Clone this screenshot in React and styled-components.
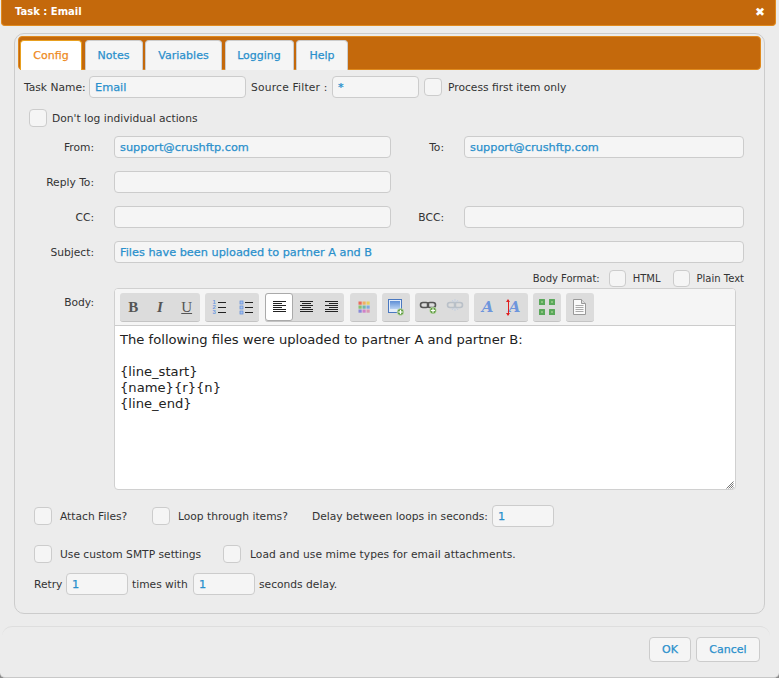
import styled, { createGlobalStyle } from 'styled-components';

const GlobalStyle = createGlobalStyle`
  html, body {
    margin: 0;
    padding: 0;
    background: #8a8a8a;
  }
  * {
    box-sizing: border-box;
  }
`;

function AlignIcon({ kind }) {
  const widths = [13, 9, 13, 9, 13, 13];
  return (
    <svg width="16" height="16" viewBox="0 0 16 16">
      {widths.map((len, i) => {
        let start = 2;
        if (kind === 'center') start = 2 + Math.floor((13 - len) / 2);
        if (kind === 'right') start = 2 + 13 - len;
        return <rect key={i} x={start} y={2 + i * 2} width={len} height="1" fill="#222" />;
      })}
    </svg>
  );
}

function ListIcon({ numbered }) {
  const rows = [3, 8, 13];
  return (
    <svg width="16" height="16" viewBox="0 0 16 16">
      {rows.map((y, i) => (
        <g key={y}>
          {numbered ? (
            <text x="1.5" y={y + 2} fontSize="6" fontWeight="700" fontFamily="Liberation Sans, sans-serif" fill="#6f9be0">
              {i + 1}
            </text>
          ) : (
            <rect x="2" y={y - 1} width="3" height="3" fill="#a9c3ee" stroke="#5f8bd8" strokeWidth="0.7" />
          )}
          <rect x="7" y={y} width="8" height="1" fill="#222" />
        </g>
      ))}
    </svg>
  );
}

function PlusBadge({ x, y }) {
  return (
    <g>
      <circle cx={x} cy={y} r="3.4" fill="#5c9a3c" stroke="#e4f2dc" strokeWidth="0.6" />
      <rect x={x - 2.2} y={y - 0.6} width="4.4" height="1.2" fill="#fff" />
      <rect x={x - 0.6} y={y - 2.2} width="1.2" height="4.4" fill="#fff" />
    </g>
  );
}

function SwatchIcon() {
  const colors = ['#e96a5a', '#f0b060', '#e8d060', '#88c070', '#70b8a8', '#80a8e0', '#8888d8', '#d080c8', '#d898b0'];
  return (
    <svg width="16" height="16" viewBox="0 0 16 16">
      {colors.map((c, i) => (
        <rect key={c} x={2.5 + (i % 3) * 4} y={2.5 + Math.floor(i / 3) * 4} width="3.2" height="3.2" fill={c} />
      ))}
    </svg>
  );
}

function ImageIcon() {
  return (
    <svg width="18" height="18" viewBox="0 0 18 18">
      <defs>
        <linearGradient id="picture" x1="0" y1="0" x2="0" y2="1">
          <stop offset="0" stopColor="#5f8fd6" />
          <stop offset="1" stopColor="#b9d2f2" />
        </linearGradient>
      </defs>
      <rect x="1.5" y="1.5" width="13" height="13" fill="#e4edf9" stroke="#4a78c0" />
      <rect x="3" y="3" width="10" height="8" fill="url(#picture)" />
      <PlusBadge x={13.5} y={14} />
    </svg>
  );
}

function LinkIcon({ off }) {
  const stroke = off ? '#b9c0c8' : '#555';
  return (
    <svg width="20" height="18" viewBox="0 0 20 18">
      <rect x="1.5" y="4.5" width="8" height="5" rx="2.5" fill="none" stroke={stroke} strokeWidth="1.6" />
      <rect x="8.5" y="4.5" width="8" height="5" rx="2.5" fill="none" stroke={stroke} strokeWidth="1.6" />
      {off && <path d="M9 1v3M9 10v3M6 2l1.5 2M12 2l-1.5 2M6 12l1.5-2M12 12l-1.5-2" stroke="#c4cfe0" fill="none" />}
      {!off && <PlusBadge x={14} y={12.5} />}
    </svg>
  );
}

function ExpandIcon() {
  return (
    <svg width="18" height="18" viewBox="0 0 18 18">
      {[
        [1, 1],
        [11, 1],
        [1, 11],
        [11, 11],
      ].map(([x, y]) => (
        <g key={`${x}-${y}`}>
          <rect x={x} y={y} width="6" height="6" rx="0.5" fill="#5aa85a" />
          <rect x={x + 2} y={y + 2} width="2" height="2" fill="#8cc480" />
        </g>
      ))}
    </svg>
  );
}

function DocIcon() {
  return (
    <svg width="16" height="18" viewBox="0 0 16 18">
      <path d="M1.5 1.5h8l4 4v11h-12z" fill="#fafafa" stroke="#999" />
      <path d="M9.5 1.5v4h4" fill="#ddd" stroke="#999" />
      <path d="M3.5 7.5h8M3.5 9.5h8M3.5 11.5h8M3.5 13.5h8" stroke="#aaa" />
    </svg>
  );
}

function ResizeGrip() {
  return (
    <svg width="8" height="8" viewBox="0 0 8 8">
      <path d="M7.5 0.5l-7 7M7.5 2.5l-5 5M7.5 4.5l-3 3M7.5 6.5l-1 1" stroke="#777" fill="none" />
    </svg>
  );
}

function App() {
  return (
    <Page>
      <GlobalStyle />
      <TitleBar>
        <TitleText>Task : Email</TitleText>
        <CloseMark>✖</CloseMark>
      </TitleBar>

      <Panel>
        <TabBar>
          <Tab $active $width={62}>Config</Tab>
          <Tab $width={58}>Notes</Tab>
          <Tab $width={77}>Variables</Tab>
          <Tab $width={69}>Logging</Tab>
          <Tab $width={52}>Help</Tab>
        </TabBar>

        <TopRow>
          <Label $width={61}>Task Name:</Label>
          <Field $width={157} defaultValue="Email" />
          <SourceLabel>Source Filter :</SourceLabel>
          <Field $width={87} defaultValue="*" />
          <Check type="checkbox" />
          <Label>Process first item only</Label>
        </TopRow>

        <LogRow>
          <Check type="checkbox" />
          <Label>Don't log individual actions</Label>
        </LogRow>

        <FormGrid>
          <FormLabel>From:</FormLabel>
          <Field defaultValue="support@crushftp.com" />
          <FormLabel>To:</FormLabel>
          <Field defaultValue="support@crushftp.com" />

          <FormLabel>Reply To:</FormLabel>
          <Field />
          <span />
          <span />

          <FormLabel>CC:</FormLabel>
          <Field />
          <FormLabel>BCC:</FormLabel>
          <Field />

          <FormLabel>Subject:</FormLabel>
          <WideField defaultValue="Files have been uploaded to partner A and B" />
        </FormGrid>

        <FormatRow>
          <Label>Body Format:</Label>
          <Check type="checkbox" />
          <Label>HTML</Label>
          <Check type="checkbox" />
          <Label>Plain Text</Label>
        </FormatRow>

        <BodyRow>
          <BodyLabel>Body:</BodyLabel>
          <Editor>
            <Toolbar>
              <ToolGroup $width={80}>
                <ToolButton><BoldGlyph>B</BoldGlyph></ToolButton>
                <ToolButton><ItalicGlyph>I</ItalicGlyph></ToolButton>
                <ToolButton><UnderGlyph>U</UnderGlyph></ToolButton>
              </ToolGroup>
              <ToolGroup $width={54}>
                <ToolButton><ListIcon numbered /></ToolButton>
                <ToolButton><ListIcon /></ToolButton>
              </ToolGroup>
              <AlignGroup $width={79}>
                <ToolButton $active><AlignIcon kind="left" /></ToolButton>
                <ToolButton><AlignIcon kind="center" /></ToolButton>
                <ToolButton><AlignIcon kind="right" /></ToolButton>
              </AlignGroup>
              <ToolGroup $width={27}>
                <ToolButton><SwatchIcon /></ToolButton>
              </ToolGroup>
              <ToolGroup $width={28}>
                <ToolButton><ImageIcon /></ToolButton>
              </ToolGroup>
              <ToolGroup $width={54}>
                <ToolButton><LinkIcon /></ToolButton>
                <ToolButton><LinkIcon off /></ToolButton>
              </ToolGroup>
              <ToolGroup $width={54}>
                <ToolButton><FontGlyph>A</FontGlyph></ToolButton>
                <ToolButton>
                  <SizeArrow />
                  <FontGlyph>A</FontGlyph>
                </ToolButton>
              </ToolGroup>
              <ToolGroup $width={28}>
                <ToolButton><ExpandIcon /></ToolButton>
              </ToolGroup>
              <ToolGroup $width={28}>
                <ToolButton><DocIcon /></ToolButton>
              </ToolGroup>
            </Toolbar>
            <EditorBody>
              <p>The following files were uploaded to partner A and partner B:</p>
              <p>&nbsp;</p>
              <p>{'{line_start}'}</p>
              <p>{'{name}{r}{n}'}</p>
              <p>{'{line_end}'}</p>
              <Grip><ResizeGrip /></Grip>
            </EditorBody>
          </Editor>
        </BodyRow>

        <OptionRow>
          <Check type="checkbox" />
          <OptionLabel $width={92}>Attach Files?</OptionLabel>
          <Check type="checkbox" />
          <OptionLabel $width={142}>Loop through items?</OptionLabel>
          <DelayLabel>Delay between loops in seconds:</DelayLabel>
          <Field $width={62} defaultValue="1" />
        </OptionRow>

        <SmtpRow>
          <Check type="checkbox" />
          <OptionLabel $width={163}>Use custom SMTP settings</OptionLabel>
          <Check type="checkbox" />
          <LongOption>Load and use mime types for email attachments.</LongOption>
        </SmtpRow>

        <RetryRow>
          <Label $width={28}>Retry</Label>
          <Field $width={62} defaultValue="1" />
          <Label $width={57}>times with</Label>
          <Field $width={62} defaultValue="1" />
          <Label>seconds delay.</Label>
        </RetryRow>
      </Panel>

      <Footer>
        <ActionButton $width={42}>OK</ActionButton>
        <ActionButton $width={64}>Cancel</ActionButton>
      </Footer>
    </Page>
  );
}

export default App;

const uiFont = `"DejaVu Sans", Verdana, sans-serif`;

const Page = styled.div`
  width: 779px;
  height: 678px;
  overflow: hidden;
  background: #ececec;
  border-bottom: 1px solid #c8c8c8;
  border-radius: 0 0 5px 5px;
  font-family: ${uiFont};
  font-size: 10.7px;
  color: #333333;
`;

const TitleBar = styled.div`
  display: flex;
  align-items: center;
  justify-content: space-between;
  width: 775px;
  height: 26px;
  margin-left: 1px;
  padding: 0 10px 2px 13px;
  background: #c4690c;
  border: 1px solid #e08a1e;
  border-top: none;
  border-radius: 0 0 4px 4px;
  color: #ffffff;
`;

const TitleText = styled.span`
  font-weight: 700;
  font-size: 10px;
`;

const CloseMark = styled.span`
  font-size: 12px;
`;

const Panel = styled.div`
  width: 751px;
  height: 581px;
  margin: 7px 0 0 14px;
  padding: 2px 3px 0;
  background: #ececec;
  border: 1px solid #cccccc;
  border-radius: 10px;
`;

const TabBar = styled.div`
  display: flex;
  align-items: flex-end;
  gap: 2.5px;
  width: 743px;
  height: 34px;
  padding-left: 1px;
  background: #c4690c;
  border: 1px solid #e08a1e;
  border-radius: 4px;
`;

const Tab = styled.div`
  display: flex;
  align-items: center;
  justify-content: center;
  width: ${(p) => p.$width}px;
  height: 30px;
  margin-bottom: -1px;
  padding-bottom: 1px;
  background: ${(p) => (p.$active ? '#ffffff' : '#f5f5f5')};
  border: 1px solid ${(p) => (p.$active ? '#e8a020' : '#cccccc')};
  border-bottom: none;
  border-radius: 4px 4px 0 0;
  color: ${(p) => (p.$active ? '#ee8a1d' : '#2a90cc')};
  font-size: 11px;
  -webkit-text-stroke: 0.25px currentColor;
`;

const Label = styled.span`
  flex: none;
  width: ${(p) => (p.$width ? `${p.$width}px` : 'auto')};
  white-space: nowrap;
`;

const SourceLabel = styled(Label)`
  width: 78px;
  padding-left: 1px;
  letter-spacing: 0.2px;
`;

const Field = styled.input`
  flex: none;
  width: ${(p) => (p.$width ? `${p.$width}px` : '100%')};
  height: 22px;
  padding: 0 5px;
  background: #f5f5f5;
  border: 1px solid #cccccc;
  border-radius: 4px;
  outline: none;
  color: #2a90cc;
  font-family: ${uiFont};
  font-size: 11.3px;
  -webkit-text-stroke: 0.25px currentColor;
`;

const WideField = styled(Field)`
  grid-column: 2 / 5;
`;

const Check = styled.input`
  appearance: none;
  flex: none;
  width: 18px;
  height: 18px;
  margin: 0;
  background: #f5f5f5;
  border: 1px solid #cccccc;
  border-radius: 4px;
`;

const TopRow = styled.div`
  display: flex;
  align-items: center;
  gap: 4px;
  height: 22px;
  margin: 6px 0 0 6px;

  & > input[type='checkbox'] {
    margin: 0 2px 0 1px;
  }
`;

const LogRow = styled.div`
  display: flex;
  align-items: center;
  gap: 5px;
  height: 18px;
  margin: 11px 0 0 11px;
`;

const FormGrid = styled.div`
  display: grid;
  grid-template-columns: 99px 277px 73px 280px;
  grid-auto-rows: 22px;
  row-gap: 13px;
  align-items: center;
  margin: 9px 0 0 -3px;
`;

const FormLabel = styled.span`
  padding-right: 20px;
  text-align: right;
`;

const FormatRow = styled.div`
  display: flex;
  align-items: center;
  justify-content: flex-end;
  gap: 7px;
  width: 726px;
  height: 18px;
  margin-top: 6px;
  font-size: 10px;

  & > input {
    width: 17px;
    height: 17px;
  }

  & > span:first-child {
    margin-right: 2px;
  }

  & > input + span {
    margin-right: 5px;
  }

  & > span:last-child {
    margin-right: 0;
  }
`;

const BodyRow = styled.div`
  display: flex;
  margin-top: 1px;
`;

const BodyLabel = styled.span`
  width: 99px;
  padding: 8px 20px 0 0;
  text-align: right;
  margin-left: -3px;
`;

const Editor = styled.div`
  position: relative;
  width: 622px;
  height: 202px;
  background: #ffffff;
  border: 1px solid #d0d0d0;
  border-radius: 4px;
  overflow: hidden;
`;

const Toolbar = styled.div`
  display: flex;
  gap: 5px;
  height: 37px;
  padding: 4px 0 0 5px;
  background: #f5f5f5;
  border-bottom: 1px solid #cccccc;
`;

const ToolGroup = styled.div`
  display: flex;
  flex: none;
  width: ${(p) => p.$width}px;
  height: 29px;
  background: #dcdcdc;
  border-bottom: 1px solid #c4c4c4;
  border-radius: 3px;
`;

const AlignGroup = styled(ToolGroup)`
  margin: 0 1px;
`;

const ToolButton = styled.div`
  position: relative;
  display: flex;
  flex: 1;
  align-items: center;
  justify-content: center;
  height: 28px;
  background: ${(p) => (p.$active ? '#ffffff' : 'transparent')};
  border: ${(p) => (p.$active ? '1px solid #aaaaaa' : 'none')};
  border-radius: 3px;
`;

const BoldGlyph = styled.span`
  font-family: "Liberation Serif", serif;
  font-size: 15px;
  font-weight: 700;
  color: #555555;
`;

const ItalicGlyph = styled(BoldGlyph)`
  font-style: italic;
`;

const UnderGlyph = styled(BoldGlyph)`
  font-weight: 400;
  text-decoration: underline;
`;

const FontGlyph = styled.span`
  font-family: "DejaVu Serif", serif;
  font-size: 15px;
  font-style: italic;
  font-weight: 700;
  color: #6d95dc;
`;

const SizeArrow = styled.span`
  position: absolute;
  left: 7px;
  top: 7px;
  width: 1px;
  height: 15px;
  background: #e02020;

  &::before,
  &::after {
    content: '';
    position: absolute;
    left: -2px;
    border-left: 2.5px solid transparent;
    border-right: 2.5px solid transparent;
  }

  &::before {
    top: -1px;
    border-bottom: 3px solid #e02020;
  }

  &::after {
    bottom: -1px;
    border-top: 3px solid #e02020;
  }
`;

const EditorBody = styled.div`
  padding: 6px 5px 0;
  font-size: 13.13px;
  line-height: 16px;
  color: #222222;

  p {
    margin: 0;
  }
`;

const Grip = styled.span`
  position: absolute;
  right: 1px;
  bottom: 0;
  line-height: 0;
`;

const OptionRow = styled.div`
  display: flex;
  align-items: center;
  height: 22px;
  margin: 15px 0 0 16px;
`;

const OptionLabel = styled.span`
  width: ${(p) => (p.$width ? `${p.$width}px` : 'auto')};
  padding-left: 8px;
  white-space: nowrap;

  & + input {
    margin-left: 8px;
  }
`;

const LongOption = styled(OptionLabel)`
  padding-left: 9px;
  letter-spacing: 0.05px;
`;

const DelayLabel = styled(Label)`
  margin-right: 4px;
`;

const SmtpRow = styled(OptionRow)`
  margin-top: 16px;
`;

const RetryRow = styled.div`
  display: flex;
  align-items: center;
  gap: 4px;
  height: 22px;
  margin: 8px 0 0 16px;
`;

const Footer = styled.div`
  display: flex;
  justify-content: flex-end;
  gap: 5px;
  width: 768px;
  height: 51px;
  margin: 12px 0 0 2px;
  padding: 10px 10px 0 0;
  border-top: 1px solid #dedede;
  border-radius: 10px 10px 0 0;
`;

const ActionButton = styled.button`
  width: ${(p) => p.$width}px;
  height: 25px;
  padding: 0;
  background: #f5f5f5;
  border: 1px solid #cccccc;
  border-radius: 4px;
  color: #2a90cc;
  font-family: ${uiFont};
  font-size: 11px;
  -webkit-text-stroke: 0.25px currentColor;
`;
